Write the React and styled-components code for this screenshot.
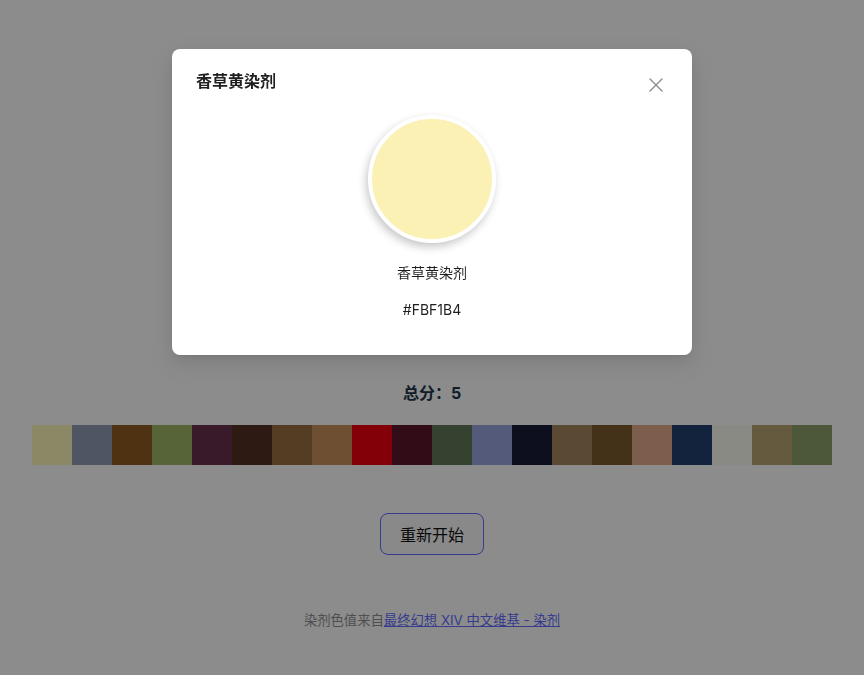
import React from "react";
import styled, { createGlobalStyle } from "styled-components";

const GlobalStyle = createGlobalStyle`
  html, body { margin: 0; padding: 0; background: #ffffff; }
  body {
    font-family: Inter, "Noto Sans CJK SC", "Noto Sans", sans-serif;
    color: #213547;
    -webkit-font-smoothing: antialiased;
  }
`;

const swatches = [
  "#FCF8B9", "#909BB2", "#905B21", "#9DB666", "#69314E",
  "#523123", "#9B6F43", "#CA9159", "#F0000F", "#5B1729",
  "#607857", "#99A5DC", "#191D3A", "#A4875D", "#7B5C2D",
  "#E4AA8A", "#233E6F", "#F9FBF0", "#B9A46F", "#8C9E68",
];

const Page = styled.main`
  min-height: 675px;
  box-sizing: border-box;
  padding: 0 32px;
  display: flex;
  flex-direction: column;
  align-items: center;
`;

const Hero = styled.section`
  height: 381px;
  display: flex;
  flex-direction: column;
  align-items: center;
  justify-content: center;
  gap: 12px;
`;

const HeroTitle = styled.h1`
  margin: 0;
  font-size: 28px;
  font-weight: 700;
`;

const HeroText = styled.p`
  margin: 0;
  font-size: 15px;
  color: #555;
`;

const Score = styled.div`
  font-size: 16px;
  line-height: 24px;
  font-weight: 700;
  color: #213547;
`;

const SwatchRow = styled.div`
  margin-top: 20px;
  width: 100%;
  display: flex;
`;

const Swatch = styled.div`
  flex: 1;
  height: 40px;
  background: ${(p) => p.$color};
`;

const RestartButton = styled.button`
  margin-top: 48px;
  box-sizing: border-box;
  height: 42px;
  padding: 0 19px;
  border-radius: 8px;
  border: 1px solid #646cff;
  background: #f9f9f9;
  font-family: inherit;
  font-size: 16px;
  font-weight: 400;
  color: #111;
  cursor: pointer;
`;

const Footer = styled.footer`
  margin-top: 54px;
  font-size: 13.33px;
  line-height: 22px;
  color: #909090;
`;

const FooterLink = styled.a`
  color: #646cff;
  text-decoration: underline;
`;

const Mask = styled.div`
  position: fixed;
  inset: 0;
  background: rgba(0, 0, 0, 0.45);
`;

const ModalWrap = styled.div`
  position: fixed;
  inset: 0;
  display: flex;
  justify-content: center;
  align-items: flex-start;
  padding-top: 49px;
`;

const Modal = styled.div`
  width: 520px;
  box-sizing: border-box;
  background: #fff;
  border-radius: 8px;
  padding: 20px 24px;
  box-shadow: 0 6px 16px 0 rgba(0, 0, 0, 0.08),
    0 3px 6px -4px rgba(0, 0, 0, 0.12), 0 9px 28px 8px rgba(0, 0, 0, 0.05);
`;

const ModalHeader = styled.div`
  display: flex;
  align-items: flex-start;
  justify-content: space-between;
  height: 24px;
`;

const ModalTitle = styled.div`
  font-size: 16px;
  line-height: 24px;
  font-weight: 600;
  color: rgba(0, 0, 0, 0.88);
`;

const CloseButton = styled.button`
  width: 24px;
  height: 24px;
  margin-top: 4px;
  padding: 0;
  border: none;
  background: transparent;
  display: flex;
  align-items: center;
  justify-content: center;
  color: rgba(0, 0, 0, 0.45);
  cursor: pointer;
`;

const ModalBody = styled.div`
  display: flex;
  flex-direction: column;
  align-items: center;
  padding-bottom: 14px;
`;

const ColorCircle = styled.div`
  margin-top: 22px;
  width: 120px;
  height: 120px;
  border-radius: 50%;
  border: 4px solid #fff;
  background: ${(p) => p.$color};
  box-shadow: -2px 4px 8px rgba(0, 0, 0, 0.22);
`;

const ColorName = styled.div`
  margin-top: 19px;
  font-size: 14px;
  line-height: 22px;
  color: rgba(0, 0, 0, 0.88);
`;

const ColorHex = styled.div`
  margin-top: 15px;
  font-size: 14px;
  line-height: 22px;
  color: rgba(0, 0, 0, 0.88);
`;

export default function App() {
  return (
    <>
      <GlobalStyle />
      <Page>
        <Hero>
          <HeroTitle>游戏结束</HeroTitle>
          <HeroText>点击色块查看染剂详情</HeroText>
        </Hero>
        <Score>总分：5</Score>
        <SwatchRow>
          {swatches.map((c, i) => (
            <Swatch key={i} $color={c} />
          ))}
        </SwatchRow>
        <RestartButton>重新开始</RestartButton>
        <Footer>
          染剂色值来自
          <FooterLink href="#">最终幻想 XIV 中文维基 - 染剂</FooterLink>
        </Footer>
      </Page>
      <Mask />
      <ModalWrap>
        <Modal>
          <ModalHeader>
            <ModalTitle>香草黄染剂</ModalTitle>
            <CloseButton aria-label="关闭">
              <svg width="14" height="14" viewBox="0 0 14 14" fill="none">
                <path
                  d="M1 1L13 13M13 1L1 13"
                  stroke="currentColor"
                  strokeWidth="1.4"
                  strokeLinecap="round"
                />
              </svg>
            </CloseButton>
          </ModalHeader>
          <ModalBody>
            <ColorCircle $color="#FBF1B4" />
            <ColorName>香草黄染剂</ColorName>
            <ColorHex>#FBF1B4</ColorHex>
          </ModalBody>
        </Modal>
      </ModalWrap>
    </>
  );
}
